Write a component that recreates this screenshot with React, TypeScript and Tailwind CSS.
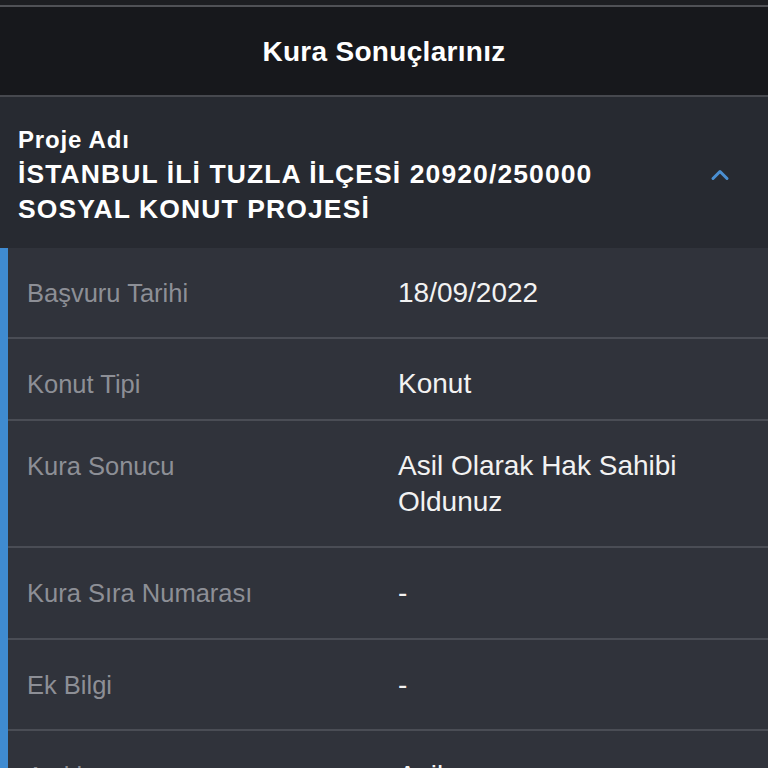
import { ChevronUp } from 'lucide-react'

const rows = [
  { label: 'Başvuru Tarihi', value: ['18/09/2022'], h: 'h-[89px]' },
  { label: 'Konut Tipi', value: ['Konut'], h: 'h-[80px]' },
  { label: 'Kura Sonucu', value: ['Asil Olarak Hak Sahibi', 'Oldunuz'], h: 'h-[125px]' },
  { label: 'Kura Sıra Numarası', value: ['-'], h: 'h-[90px]' },
  { label: 'Ek Bilgi', value: ['-'], h: 'h-[89px]' },
  { label: 'Açıklama', value: ['Asil'], h: 'h-[90px]' },
]

export default function App() {
  return (
    <div
      className="w-[768px] h-[768px] overflow-hidden bg-[#30333b] flex flex-col"
      style={{ fontFamily: '"Liberation Sans", Arial, sans-serif' }}
    >
      {/* Top strip */}
      <div className="h-[5px] bg-[#1d1e22] flex-shrink-0" />
      <div className="h-[2px] bg-[#505156] flex-shrink-0" />

      {/* Title bar */}
      <header className="h-[88px] bg-[#17181c] flex items-center justify-center flex-shrink-0">
        <h1 className="text-[28px] font-bold text-white tracking-[0.3px] mt-[2px]">Kura Sonuçlarınız</h1>
      </header>
      <div className="h-[2px] bg-[#46484e] flex-shrink-0" />

      {/* Project header */}
      <div className="bg-[#272a31] flex items-center pl-[18px] pr-[34px] pt-[29px] pb-[21px] flex-shrink-0">
        <div className="flex-1">
          <p className="text-[24px] leading-[28px] font-bold text-white tracking-[0.8px]">Proje Adı</p>
          <p className="text-[26.5px] leading-[35px] font-bold text-white tracking-[1.1px] mt-[3px]">
            İSTANBUL İLİ TUZLA İLÇESİ 20920/250000
            <br />
            SOSYAL KONUT PROJESİ
          </p>
        </div>
        <ChevronUp size={28} strokeWidth={2.6} className="text-[#4a8fd2] -mt-[4px]" />
      </div>

      {/* Detail rows */}
      <div className="flex flex-1">
        <div className="w-[8px] bg-[#3f8bd1] flex-shrink-0" />
        <div className="flex-1 flex flex-col">
          {rows.map((row, i) => (
            <div key={row.label} className="flex flex-col flex-shrink-0">
              <div className={`${row.h} grid grid-cols-[371px_1fr] items-baseline pl-[19px] pt-[27px] leading-[36px]`}>
                <span className="text-[25.5px] text-[#8d8f96]">{row.label}</span>
                <span className="text-[28px] text-[#f2f2f2]">
                  {row.value.map((v) => (
                    <span key={v} className="block">{v}</span>
                  ))}
                </span>
              </div>
              {i < rows.length - 1 && <div className="h-[2px] bg-[#4a4d55]" />}
            </div>
          ))}
        </div>
      </div>
    </div>
  )
}
